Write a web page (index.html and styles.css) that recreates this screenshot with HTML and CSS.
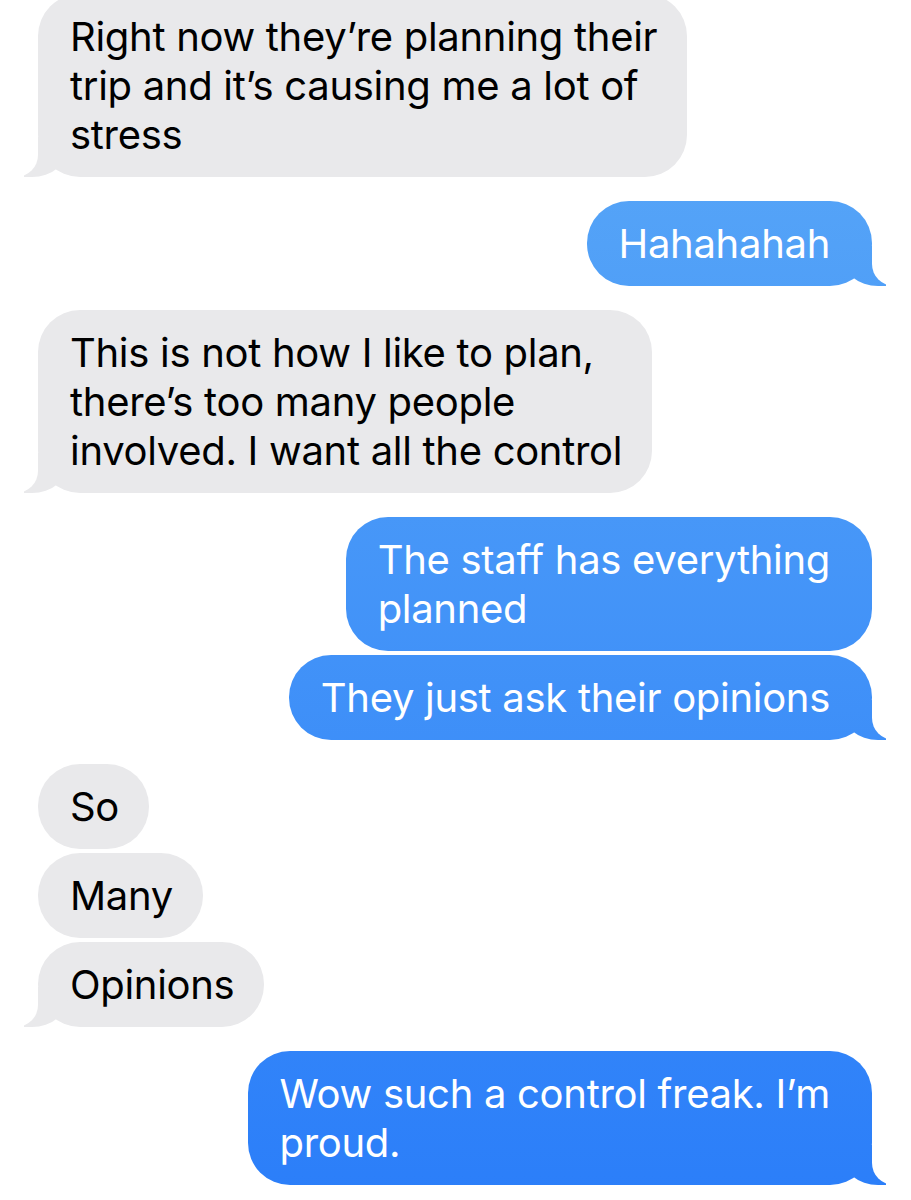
FILE: index.html
```html
<!DOCTYPE html>
<html lang="en">
<head>
  <meta charset="UTF-8" />
  <meta name="viewport" content="width=device-width, initial-scale=1.0"/>
  <title>Messages</title>
  <link rel="stylesheet" href="styles.css">
</head>
<body>

  <!-- Conversación -->
  <main class="chat">

    <div class="group received">
      <p class="bubble tail">Right now they’re planning their<br>trip and it’s causing me a lot of<br>stress</p>
    </div>

    <div class="group sent">
      <p class="bubble tail">Hahahahah</p>
    </div>

    <div class="group received">
      <p class="bubble tail">This is not how I like to plan,<br>there’s too many people<br>involved. I want all the control</p>
    </div>

    <div class="group sent">
      <p class="bubble">The staff has everything<br>planned</p>
      <p class="bubble tail">They just ask their opinions</p>
    </div>

    <div class="group received">
      <p class="bubble">So</p>
      <p class="bubble">Many</p>
      <p class="bubble tail">Opinions</p>
    </div>

    <div class="group sent">
      <p class="bubble tail">Wow such a control freak. I’m<br>proud.</p>
    </div>

  </main>

</body>
</html>
```

FILE: styles.css
```css
html, body {
  overflow-x: hidden;
}

body {
  font-family: "Inter", "Liberation Sans", sans-serif;
  background: #fff;
  margin: 0;
  padding: 0;
}

.chat {
  display: flex;
  flex-direction: column;
  gap: 24px;
  margin-top: -6px;
  padding: 0 39px 0 38px;
}

.group {
  display: flex;
  flex-direction: column;
  gap: 4px;
}

.received {
  align-items: flex-start;
}

.sent {
  align-items: flex-end;
}

.bubble {
  position: relative;
  box-sizing: border-box;
  max-width: 680px;
  margin: 0;
  padding: 18px 30px 18px 32px;
  border-radius: 42px;
  font-size: 40px;
  line-height: 49px;
  letter-spacing: -0.3px;
  white-space: nowrap;
}

.received .bubble {
  background: #e9e9eb;
  color: #000;
}

.sent .bubble {
  padding: 18px 42px 18px 32px;
  color: #fff;
  background: linear-gradient(#5caaf7 0, #2b7ef9 1200px) fixed;
}

/* colita de la burbuja */
.bubble.tail::before,
.bubble.tail::after {
  content: "";
  position: absolute;
  bottom: 0;
  height: 40px;
}

.received .bubble.tail::before {
  left: -14px;
  width: 44px;
  background: #e9e9eb;
  border-bottom-right-radius: 36px 30px;
}

.received .bubble.tail::after {
  left: -30px;
  width: 30px;
  background: #fff;
  border-bottom-right-radius: 22px;
}

.sent .bubble.tail::before {
  right: -14px;
  width: 44px;
  background: linear-gradient(#5caaf7 0, #2b7ef9 1200px) fixed;
  border-bottom-left-radius: 36px 30px;
}

.sent .bubble.tail::after {
  right: -30px;
  width: 30px;
  background: #fff;
  border-bottom-left-radius: 22px;
}
```
